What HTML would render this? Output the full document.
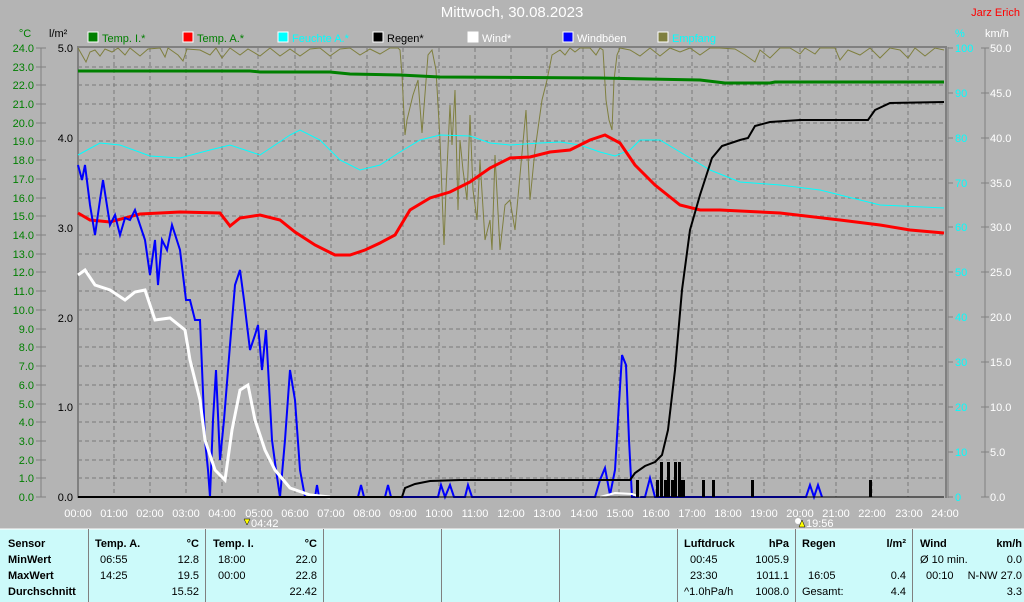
<!DOCTYPE html>
<html><head><meta charset="utf-8"><style>
html,body{margin:0;padding:0;background:#b4b4b4;}
svg{display:block;font-family:"Liberation Sans",sans-serif;}
</style></head><body>
<svg width="1024" height="602" viewBox="0 0 1024 602" xmlns="http://www.w3.org/2000/svg">
<rect width="1024" height="602" fill="#b4b4b4"/>
<text x="512" y="17" font-size="15" fill="#fff" text-anchor="middle">Mittwoch, 30.08.2023</text>
<text x="1020" y="16" font-size="11" fill="#f00" text-anchor="end">Jarz Erich</text>
<!-- axis titles -->
<text x="25" y="37" font-size="11" fill="#007f00" text-anchor="middle">°C</text>
<text x="49" y="37" font-size="11" fill="#000">l/m²</text>
<text x="955" y="37" font-size="11" fill="#0ff">%</text>
<text x="985" y="37" font-size="11" fill="#fff">km/h</text>
<!-- legend -->
<g font-size="11">
<rect x="88" y="32" width="10" height="10" fill="#007f00" stroke="#fff"/><text x="102" y="42" fill="#007f00">Temp. I.*</text>
<rect x="183" y="32" width="10" height="10" fill="#f00" stroke="#fff"/><text x="197" y="42" fill="#007f00">Temp. A.*</text>
<rect x="278" y="32" width="10" height="10" fill="#0ff" stroke="#fff"/><text x="292" y="42" fill="#0ff">Feuchte A.*</text>
<rect x="373" y="32" width="10" height="10" fill="#000" stroke="#fff"/><text x="387" y="42" fill="#000">Regen*</text>
<rect x="468" y="32" width="10" height="10" fill="#fff" stroke="#fff"/><text x="482" y="42" fill="#fff">Wind*</text>
<rect x="563" y="32" width="10" height="10" fill="#00f" stroke="#fff"/><text x="577" y="42" fill="#fff">Windböen</text>
<rect x="658" y="32" width="10" height="10" fill="#7f7f3f" stroke="#fff"/><text x="672" y="42" fill="#0ff">Empfang</text>
</g>
<!-- grid -->
<g stroke="#7a7a7a" stroke-dasharray="4,3" stroke-width="1">
<path d="M114,48V497M150,48V497M186,48V497M222,48V497M258,48V497M295,48V497M331,48V497M367,48V497M403,48V497M439,48V497M475,48V497M511,48V497M547,48V497M583,48V497M619,48V497M656,48V497M692,48V497M728,48V497M764,48V497M800,48V497M836,48V497M872,48V497M908,48V497"/>
<path d="M78,67H944M78,85H944M78,104H944M78,123H944M78,141H944M78,160H944M78,179H944M78,198H944M78,216H944M78,235H944M78,254H944M78,272H944M78,291H944M78,310H944M78,329H944M78,347H944M78,366H944M78,385H944M78,404H944M78,422H944M78,441H944M78,460H944M78,478H944"/>
</g>
<!-- plot frame -->
<path d="M78,498V47H946V498" fill="none" stroke="#808080" stroke-width="2"/>
<line x1="948" y1="47" x2="948" y2="498" stroke="#808080"/>
<!-- left temp axis -->
<line x1="41" y1="48" x2="41" y2="497" stroke="#808080"/>
<g stroke="#808080"><path d="M36,48H46M36,67H46M36,85H46M36,104H46M36,123H46M36,141H46M36,160H46M36,179H46M36,198H46M36,216H46M36,235H46M36,254H46M36,272H46M36,291H46M36,310H46M36,329H46M36,347H46M36,366H46M36,385H46M36,404H46M36,422H46M36,441H46M36,460H46M36,478H46M36,497H46"/></g>
<g font-size="11" fill="#007f00" text-anchor="end">
<text x="34" y="52">24.0</text><text x="34" y="71">23.0</text><text x="34" y="89">22.0</text><text x="34" y="108">21.0</text><text x="34" y="127">20.0</text><text x="34" y="145">19.0</text><text x="34" y="164">18.0</text><text x="34" y="183">17.0</text><text x="34" y="202">16.0</text><text x="34" y="220">15.0</text><text x="34" y="239">14.0</text><text x="34" y="258">13.0</text><text x="34" y="276">12.0</text><text x="34" y="295">11.0</text><text x="34" y="314">10.0</text><text x="34" y="333">9.0</text><text x="34" y="351">8.0</text><text x="34" y="370">7.0</text><text x="34" y="389">6.0</text><text x="34" y="408">5.0</text><text x="34" y="426">4.0</text><text x="34" y="445">3.0</text><text x="34" y="464">2.0</text><text x="34" y="482">1.0</text><text x="34" y="501">0.0</text>
</g>
<g font-size="11" fill="#000" text-anchor="end">
<text x="73" y="52">5.0</text><text x="73" y="142">4.0</text><text x="73" y="232">3.0</text><text x="73" y="322">2.0</text><text x="73" y="411">1.0</text><text x="73" y="501">0.0</text>
</g>
<!-- right axes -->
<g stroke="#808080"><path d="M948,48H953M948,93H953M948,138H953M948,183H953M948,227H953M948,272H953M948,317H953M948,362H953M948,407H953M948,452H953M948,497H953"/>
<path d="M985,48V497M981,48H989M981,93H989M981,138H989M981,183H989M981,227H989M981,272H989M981,317H989M981,362H989M981,407H989M981,452H989M981,497H989"/></g>
<g font-size="11" fill="#0ff">
<text x="955" y="52">100</text><text x="955" y="97">90</text><text x="955" y="142">80</text><text x="955" y="187">70</text><text x="955" y="231">60</text><text x="955" y="276">50</text><text x="955" y="321">40</text><text x="955" y="366">30</text><text x="955" y="411">20</text><text x="955" y="456">10</text><text x="955" y="501">0</text>
</g>
<g font-size="11" fill="#fff">
<text x="990" y="52">50.0</text><text x="990" y="97">45.0</text><text x="990" y="142">40.0</text><text x="990" y="187">35.0</text><text x="990" y="231">30.0</text><text x="990" y="276">25.0</text><text x="990" y="321">20.0</text><text x="990" y="366">15.0</text><text x="990" y="411">10.0</text><text x="990" y="456">5.0</text><text x="990" y="501">0.0</text>
</g>
<!-- curves -->
<polyline fill="none" stroke="#7f7f3f" stroke-width="1" points="78,48 82,55 86,62 90,52 95,50 100,56 105,49 112,52 118,48 125,55 130,48 140,56 148,49 160,48 165,57 168,48 178,55 183,61 187,49 200,50 210,55 216,48 222,58 230,48 240,55 248,49 260,56 270,48 280,56 290,49 300,56 310,49 320,48 330,56 340,49 350,48 360,55 370,49 380,54 390,48 398,48 400,50 402,75 405,135 407,120 413,95 418,80 422,133 428,55 432,50 436,70 440,140 444,245 446,190 450,105 452,145 455,90 458,210 460,140 463,170 467,200 470,115 473,190 477,220 480,160 485,240 490,220 492,250 495,155 500,250 505,205 510,200 515,230 520,175 526,110 530,200 535,150 542,100 547,80 552,55 560,50 565,55 570,48 575,52 580,48 590,48 596,55 600,48 603,50 606,100 609,120 612,130 614,80 617,55 620,48 630,50 640,56 650,48 660,56 670,48 680,52 690,48 700,55 710,48 720,48 735,49 745,55 755,62 760,50 770,58 780,48 790,48 800,54 805,48 815,54 820,48 835,48 840,60 848,50 860,55 870,48 880,58 890,48 900,50 908,58 915,48 925,56 935,48 944,50"/>
<polyline fill="none" stroke="#008000" stroke-width="3" points="78,71 250,71 260,72 330,72 350,74 400,75 440,77 600,78 700,80 725,83 770,83 775,82 944,82"/>
<polyline fill="none" stroke="#0ff" stroke-width="1" points="78,155 100,143 120,145 150,156 180,158 210,150 230,145 260,155 290,135 300,130 320,140 340,160 360,170 380,165 400,152 420,140 440,135 470,136 490,143 510,145 540,143 560,142 580,145 600,152 615,156 630,150 640,140 660,140 690,158 710,170 740,182 780,185 820,190 860,200 880,205 944,208"/>
<polyline fill="none" stroke="#f00" stroke-width="3" points="78,213 90,220 110,222 140,214 180,212 220,213 230,226 240,218 260,215 280,220 295,232 315,245 335,255 350,255 365,250 380,243 395,235 410,210 430,198 450,192 470,182 490,168 510,158 530,157 550,152 570,150 590,140 605,135 620,143 635,165 655,185 680,205 700,210 720,210 780,213 840,220 880,225 910,230 944,233"/>
<polyline fill="none" stroke="#00f" stroke-width="2" points="78,165 82,180 85,165 90,205 95,235 100,200 103,180 110,225 115,215 120,235 125,218 130,220 135,210 140,225 145,240 150,275 155,240 158,285 162,240 167,250 172,225 180,250 186,300 190,300 195,320 200,320 205,440 208,470 210,497 213,420 216,370 220,460 224,420 230,345 235,285 240,270 244,300 250,350 255,335 258,325 262,370 266,330 272,440 276,470 280,497 285,440 290,370 295,400 300,470 305,497 315,497 317,485 319,497 358,497 361,485 364,497 385,497 388,485 391,497 438,497 441,485 445,497 450,485 454,497 465,497 468,485 472,497 595,497 600,480 605,468 610,495 615,470 618,420 622,355 626,365 629,440 632,497 645,497 650,478 655,497 806,497 810,485 814,497 818,485 822,497"/>
<polyline fill="none" stroke="#fff" stroke-width="3" points="78,275 85,270 95,285 110,290 125,300 135,292 145,290 155,320 170,318 185,330 190,360 200,400 205,440 215,470 225,480 232,430 240,390 248,385 255,420 265,450 275,470 290,488 310,495 330,497"/>
<polyline fill="none" stroke="#fff" stroke-width="2" points="600,497 615,493 632,494 640,497"/>
<polyline fill="none" stroke="#000" stroke-width="2" points="78,497 402,497 405,488 415,484 430,481 460,480 630,480 635,473 645,466 655,462 662,455 668,430 675,370 682,290 690,230 700,195 712,158 722,146 740,140 748,138 755,126 770,122 800,120 868,120 875,110 890,103 944,102"/>
<g fill="#000"><rect x="656" y="480" width="3" height="17"/><rect x="660" y="462" width="3" height="35"/><rect x="664" y="480" width="3" height="17"/><rect x="667" y="462" width="3" height="35"/><rect x="671" y="480" width="3" height="17"/><rect x="674" y="462" width="3" height="35"/><rect x="678" y="462" width="3" height="35"/><rect x="681" y="480" width="4" height="17"/><rect x="636" y="480" width="3" height="17"/><rect x="702" y="480" width="3" height="17"/><rect x="712" y="480" width="3" height="17"/><rect x="751" y="480" width="3" height="17"/><rect x="869" y="480" width="3" height="17"/></g>
<line x1="78" y1="497" x2="944" y2="497" stroke="#000" stroke-width="1"/>
<!-- time labels -->
<g font-size="11" fill="#fff" text-anchor="middle">
<text x="78" y="517">00:00</text><text x="114" y="517">01:00</text><text x="150" y="517">02:00</text><text x="186" y="517">03:00</text><text x="222" y="517">04:00</text><text x="259" y="517">05:00</text><text x="295" y="517">06:00</text><text x="331" y="517">07:00</text><text x="367" y="517">08:00</text><text x="403" y="517">09:00</text><text x="439" y="517">10:00</text><text x="475" y="517">11:00</text><text x="511" y="517">12:00</text><text x="547" y="517">13:00</text><text x="584" y="517">14:00</text><text x="620" y="517">15:00</text><text x="656" y="517">16:00</text><text x="692" y="517">17:00</text><text x="728" y="517">18:00</text><text x="764" y="517">19:00</text><text x="800" y="517">20:00</text><text x="836" y="517">21:00</text><text x="872" y="517">22:00</text><text x="909" y="517">23:00</text><text x="945" y="517">24:00</text>
</g>
<path d="M244,519h6l-3,6z" fill="#ff0" stroke="#000" stroke-width=".5"/>
<text x="251" y="527" font-size="11" fill="#fff">04:42</text>
<circle cx="798" cy="521" r="3" fill="#fff"/><path d="M799,527h6l-3,-7z" fill="#ff0" stroke="#000" stroke-width=".5"/>
<text x="806" y="527" font-size="11" fill="#fff">19:56</text>
<!-- table -->
<rect x="0" y="529" width="1024" height="73" fill="#ccfafa"/>
<line x1="0" y1="529" x2="1024" y2="529" stroke="#fff"/>
<g stroke="#808080"><path d="M88.5,529V602M205.5,529V602M323.5,529V602M441.5,529V602M559.5,529V602M677.5,529V602M795.5,529V602M912.5,529V602"/></g>
<g font-size="11" fill="#000">
<g font-weight="bold"><text x="8" y="547">Sensor</text><text x="8" y="563">MinWert</text><text x="8" y="579">MaxWert</text><text x="8" y="595">Durchschnitt</text>
<text x="95" y="547">Temp. A.</text><text x="199" y="547" text-anchor="end">°C</text>
<text x="213" y="547">Temp. I.</text><text x="317" y="547" text-anchor="end">°C</text>
<text x="684" y="547">Luftdruck</text><text x="789" y="547" text-anchor="end">hPa</text>
<text x="802" y="547">Regen</text><text x="906" y="547" text-anchor="end">l/m²</text>
<text x="920" y="547">Wind</text><text x="1022" y="547" text-anchor="end">km/h</text></g>
<text x="100" y="563">06:55</text><text x="199" y="563" text-anchor="end">12.8</text>
<text x="100" y="579">14:25</text><text x="199" y="579" text-anchor="end">19.5</text>
<text x="199" y="595" text-anchor="end">15.52</text>
<text x="218" y="563">18:00</text><text x="317" y="563" text-anchor="end">22.0</text>
<text x="218" y="579">00:00</text><text x="317" y="579" text-anchor="end">22.8</text>
<text x="317" y="595" text-anchor="end">22.42</text>
<text x="690" y="563">00:45</text><text x="789" y="563" text-anchor="end">1005.9</text>
<text x="690" y="579">23:30</text><text x="789" y="579" text-anchor="end">1011.1</text>
<text x="684" y="595">^1.0hPa/h</text><text x="789" y="595" text-anchor="end">1008.0</text>
<text x="808" y="579">16:05</text><text x="906" y="579" text-anchor="end">0.4</text>
<text x="802" y="595">Gesamt:</text><text x="906" y="595" text-anchor="end">4.4</text>
<text x="920" y="563">Ø 10 min.</text><text x="1022" y="563" text-anchor="end">0.0</text>
<text x="926" y="579">00:10</text><text x="1022" y="579" text-anchor="end">N-NW 27.0</text>
<text x="1022" y="595" text-anchor="end">3.3</text>
</g>
</svg>
</body></html>
